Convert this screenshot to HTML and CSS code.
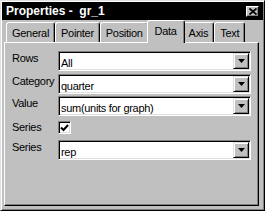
FILE: index.html
```html
<!DOCTYPE html>
<html>
<head>
  <meta name="viewport" content="width=device-width, initial-scale=1.0">
  <link rel="stylesheet" href="styles.css">
</head>
<body>
  <div class="window">
    <div class="titlebar">
      <span class="title">Properties -&nbsp;&nbsp;gr_1</span>
      <div class="close-btn">
        <svg width="8" height="7" viewBox="0 0 8 7"><path d="M0.5 0.5 L7.5 6.5 M7.5 0.5 L0.5 6.5" stroke="#000" stroke-width="1.8"/></svg>
      </div>
    </div>

    <div class="tabs">
      <div class="tab">General</div>
      <div class="tab">Pointer</div>
      <div class="tab">Position</div>
      <div class="tab active">Data</div>
      <div class="tab">Axis</div>
      <div class="tab">Text</div>
    </div>

    <div class="page">
      <div class="row">
        <div class="label">Rows</div>
        <div class="combo">
          <span class="combo-text">All</span>
          <span class="drop-btn"><svg width="7" height="4" viewBox="0 0 7 4"><polygon points="0,0 7,0 3.5,4" fill="#000"/></svg></span>
        </div>
      </div>
      <div class="row">
        <div class="label">Category</div>
        <div class="combo">
          <span class="combo-text">quarter</span>
          <span class="drop-btn"><svg width="7" height="4" viewBox="0 0 7 4"><polygon points="0,0 7,0 3.5,4" fill="#000"/></svg></span>
        </div>
      </div>
      <div class="row">
        <div class="label">Value</div>
        <div class="combo">
          <span class="combo-text">sum(units for graph)</span>
          <span class="drop-btn"><svg width="7" height="4" viewBox="0 0 7 4"><polygon points="0,0 7,0 3.5,4" fill="#000"/></svg></span>
        </div>
      </div>
      <div class="row">
        <div class="label check-label">Series</div>
        <div class="checkbox">
          <svg width="9" height="8" viewBox="0 0 9 8"><polyline points="1,3.5 3.5,6 8,1" fill="none" stroke="#000" stroke-width="2"/></svg>
        </div>
      </div>
      <div class="row">
        <div class="label">Series</div>
        <div class="combo">
          <span class="combo-text">rep</span>
          <span class="drop-btn"><svg width="7" height="4" viewBox="0 0 7 4"><polygon points="0,0 7,0 3.5,4" fill="#000"/></svg></span>
        </div>
      </div>
    </div>
  </div>
</body>
</html>
```

FILE: styles.css
```css
body {
  margin: 0;
  background: #c0c0c0;
  font-family: "Liberation Sans", Arial, sans-serif;
  font-size: 11px;
  letter-spacing: -0.3px;
  color: #000;
}

.window {
  width: 265px;
  height: 211px;
  box-sizing: border-box;
  border: 1px solid;
  border-color: #dfdfdf #000 #000 #dfdfdf;
  box-shadow: inset 1px 1px #fff, inset -1px -1px #808080;
  padding: 1px;
  display: flex;
  flex-direction: column;
}

.titlebar {
  height: 18px;
  background: #000;
  color: #fff;
  display: flex;
  align-items: center;
  padding: 0 4px 0 4px;
}

.title {
  font-weight: bold;
  font-size: 12px;
  letter-spacing: 0;
  white-space: pre;
}

.close-btn {
  margin-left: auto;
  width: 13px;
  height: 11px;
  box-sizing: border-box;
  background: #c0c0c0;
  border: 1px solid;
  border-color: #fff #000 #000 #fff;
  box-shadow: inset -1px -1px #808080;
  display: flex;
  align-items: center;
  justify-content: center;
}

.tabs {
  height: 22px;
  display: flex;
  align-items: flex-end;
  padding-left: 4px;
  position: relative;
  z-index: 1;
}

.tab {
  height: 19px;
  line-height: 20px;
  padding: 0 5px;
  background: #c0c0c0;
  border-top: 1px solid #fff;
  border-left: 1px solid #fff;
  border-right: 1px solid #000;
  box-shadow: inset -1px 0 #808080;
  border-radius: 3px 3px 0 0;
}

.tab.active {
  height: 19px;
  padding: 0 7px 3px;
  margin: 0 -2px -1px;
  position: relative;
}

.page {
  width: 255px;
  height: 164px;
  margin-left: 2px;
  box-sizing: border-box;
  border: 1px solid;
  border-color: #fff #000 #000 #fff;
  box-shadow: inset -1px -1px #808080;
  padding: 8px 0 0 7px;
}

.row {
  display: flex;
  height: 20px;
  margin-bottom: 2px;
}

.row:first-child {
  margin-bottom: 3px;
}

.label {
  width: 46px;
  line-height: 15px;
}

.check-label {
  line-height: 19px;
}

.combo {
  width: 193px;
  height: 20px;
  box-sizing: border-box;
  background: #fff;
  border: 1px solid;
  border-color: #808080 #fff #fff #808080;
  box-shadow: inset 1px 1px #000, inset -1px -1px #dfdfdf;
  padding: 1px 1px 1px 2px;
  display: flex;
}

.combo-text {
  flex: 1;
  line-height: 14px;
  padding-top: 3px;
  white-space: nowrap;
}

.drop-btn {
  width: 16px;
  height: 16px;
  box-sizing: border-box;
  background: #c0c0c0;
  border: 1px solid;
  border-color: #dfdfdf #000 #000 #dfdfdf;
  box-shadow: inset 1px 1px #fff, inset -1px -1px #808080;
  display: flex;
  align-items: center;
  justify-content: center;
}

.checkbox {
  width: 13px;
  height: 13px;
  margin-top: 3px;
  box-sizing: border-box;
  background: #fff;
  border: 1px solid;
  border-color: #808080 #fff #fff #808080;
  box-shadow: inset 1px 1px #000, inset -1px -1px #dfdfdf;
  display: flex;
  align-items: center;
  justify-content: center;
}
```
